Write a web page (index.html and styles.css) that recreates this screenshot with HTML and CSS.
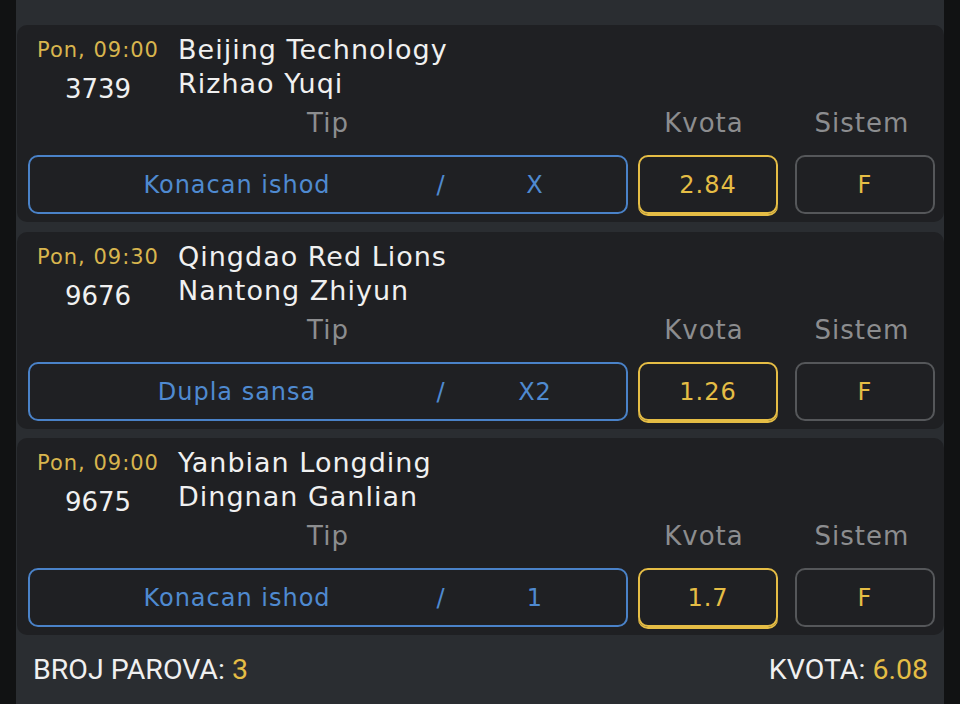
FILE: index.html
```html
<!DOCTYPE html>
<html lang="sr">
<head>
    <meta charset="UTF-8">
    <meta name="viewport" content="width=device-width, initial-scale=1.0">
    <title>Tiket</title>
    <link rel="stylesheet" href="styles.css">
</head>
<body>
    <main class="slip">
        <section class="match">
            <div class="match-head">
                <div class="meta">
                    <div class="date">Pon, 09:00</div>
                    <div class="code">3739</div>
                </div>
                <div class="teams">
                    <div>Beijing Technology</div>
                    <div>Rizhao Yuqi</div>
                </div>
            </div>
            <div class="grid labels">
                <span>Tip</span>
                <span class="odd-label">Kvota</span>
                <span class="sys-label">Sistem</span>
            </div>
            <div class="grid">
                <div class="box tip">
                    <span class="tip-name">Konacan ishod</span>
                    <span class="tip-sep">/</span>
                    <span class="tip-val">X</span>
                </div>
                <div class="box odd">2.84</div>
                <div class="box sys">F</div>
            </div>
        </section>

        <section class="match">
            <div class="match-head">
                <div class="meta">
                    <div class="date">Pon, 09:30</div>
                    <div class="code">9676</div>
                </div>
                <div class="teams">
                    <div>Qingdao Red Lions</div>
                    <div>Nantong Zhiyun</div>
                </div>
            </div>
            <div class="grid labels">
                <span>Tip</span>
                <span class="odd-label">Kvota</span>
                <span class="sys-label">Sistem</span>
            </div>
            <div class="grid">
                <div class="box tip">
                    <span class="tip-name">Dupla sansa</span>
                    <span class="tip-sep">/</span>
                    <span class="tip-val">X2</span>
                </div>
                <div class="box odd">1.26</div>
                <div class="box sys">F</div>
            </div>
        </section>

        <section class="match">
            <div class="match-head">
                <div class="meta">
                    <div class="date">Pon, 09:00</div>
                    <div class="code">9675</div>
                </div>
                <div class="teams">
                    <div>Yanbian Longding</div>
                    <div>Dingnan Ganlian</div>
                </div>
            </div>
            <div class="grid labels">
                <span>Tip</span>
                <span class="odd-label">Kvota</span>
                <span class="sys-label">Sistem</span>
            </div>
            <div class="grid">
                <div class="box tip">
                    <span class="tip-name">Konacan ishod</span>
                    <span class="tip-sep">/</span>
                    <span class="tip-val">1</span>
                </div>
                <div class="box odd">1.7</div>
                <div class="box sys">F</div>
            </div>
        </section>

        <footer class="summary">
            <div>BROJ PAROVA: <span class="hl">3</span></div>
            <div>KVOTA: <span class="hl">6.08</span></div>
        </footer>
    </main>
</body>
</html>
```

FILE: styles.css
```css
:root {
    --edge: #111213;
    --panel: #2a2d31;
    --card: #1f2023;
    --text: #f0f0f0;
    --muted: #8c8d8f;
    --gold: #e5bd45;
    --date: #d8b54e;
    --blue: #4a82c8;
    --blue-text: #4f8ad0;
    --grey-border: #55575a;
}

* {
    margin: 0;
    padding: 0;
    box-sizing: border-box;
}

body {
    background-color: var(--edge);
    color: var(--text);
    font-family: 'DejaVu Sans', sans-serif;
    height: 704px;
    overflow: hidden;
}

.slip {
    margin: 0 16px;
    height: 704px;
    background-color: var(--panel);
    padding-top: 25px;
}

.match {
    background-color: var(--card);
    border-radius: 10px;
    padding: 8px 9px 8px 11px;
    margin-left: 1px;
    height: 197px;
    margin-bottom: 10px;
}

.match + .match + .match {
    margin-top: -1px;
}

.match-head {
    display: flex;
    align-items: flex-start;
    height: 73px;
}

.meta {
    width: 140px;
    text-align: center;
}

.date {
    color: var(--date);
    font-size: 21px;
    letter-spacing: 1px;
    line-height: 34px;
}

.code {
    font-size: 26px;
    line-height: 39px;
    padding-top: 3px;
}

.teams {
    font-size: 27px;
    letter-spacing: 1px;
    line-height: 34px;
    padding-left: 10px;
}

.grid {
    display: grid;
    grid-template-columns: 600px 140px 147px;
    column-gap: 10px;
}

.labels {
    color: var(--muted);
    font-size: 26px;
    letter-spacing: 1px;
    line-height: 34px;
    text-align: center;
    margin-bottom: 15px;
}

.labels .odd-label {
    padding-right: 8px;
}

.labels .sys-label {
    padding-left: 1px;
}

.box {
    height: 59px;
    border: 2px solid var(--grey-border);
    border-radius: 10px;
    display: flex;
    align-items: center;
    justify-content: center;
    font-size: 24px;
    letter-spacing: 1px;
}

.tip {
    border-color: var(--blue);
    color: var(--blue-text);
    display: grid;
    grid-template-columns: 408px 6px 1fr;
    justify-items: center;
}

.tip-name {
    padding-left: 6px;
}

.odd {
    border-color: var(--gold);
    color: var(--gold);
    box-shadow: 0 2px 0 var(--gold);
}

.box.sys {
    margin-left: 7px;
    color: var(--gold);
}

.summary {
    display: flex;
    justify-content: space-between;
    font-family: Roboto, sans-serif;
    font-size: 28.5px;
    line-height: 34px;
    padding: 8px 0 0 17px;
    margin-right: 16px;
}

.hl {
    color: var(--gold);
}
```
